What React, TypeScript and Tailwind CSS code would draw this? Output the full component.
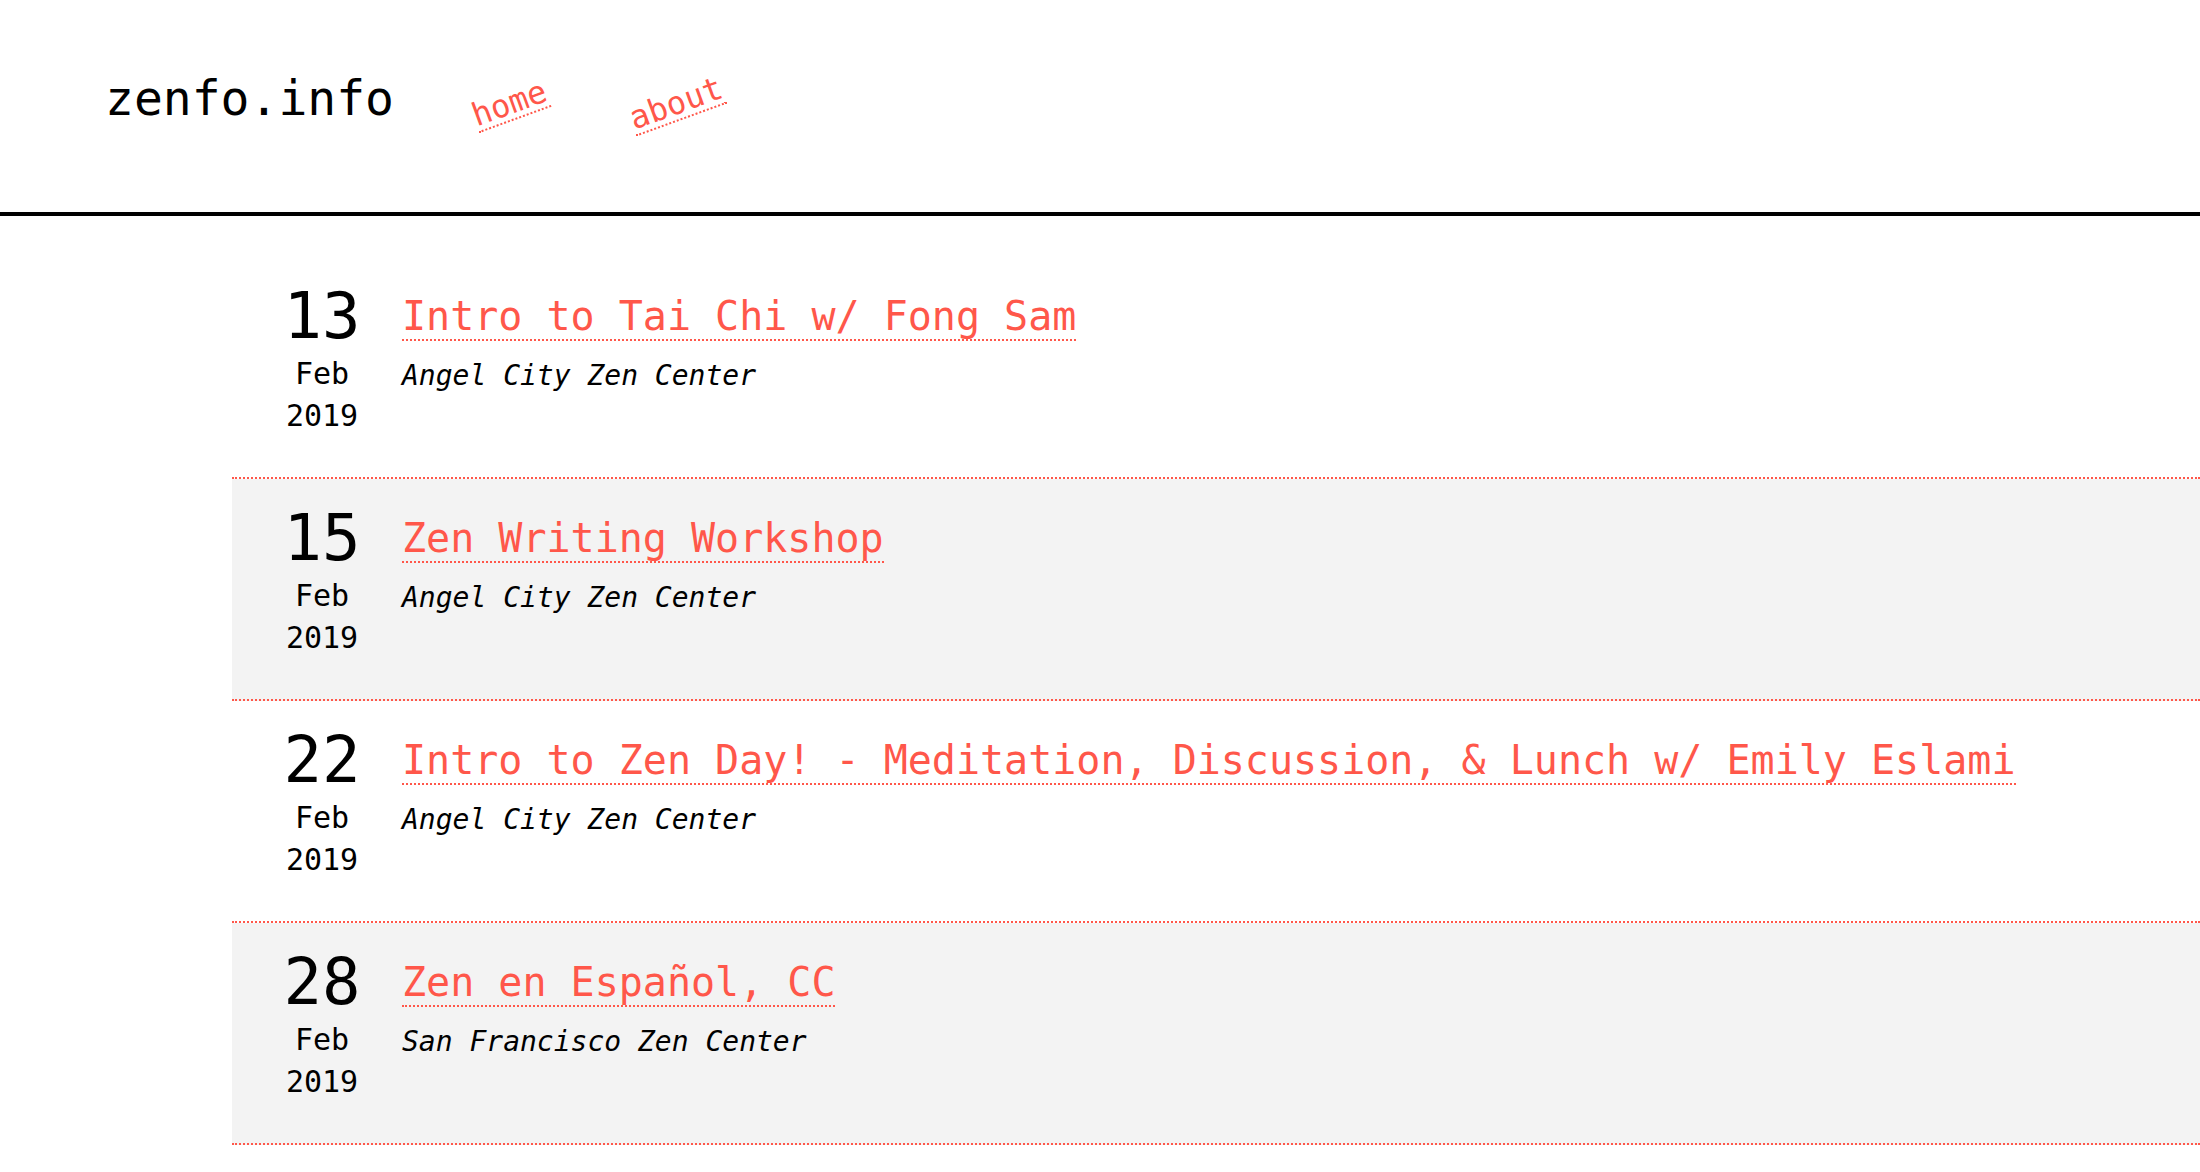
const events = [
  { day: "13", month: "Feb", year: "2019", title: "Intro to Tai Chi w/ Fong Sam", venue: "Angel City Zen Center" },
  { day: "15", month: "Feb", year: "2019", title: "Zen Writing Workshop", venue: "Angel City Zen Center" },
  {
    day: "22",
    month: "Feb",
    year: "2019",
    title: "Intro to Zen Day! - Meditation, Discussion, & Lunch w/ Emily Eslami",
    venue: "Angel City Zen Center",
  },
  { day: "28", month: "Feb", year: "2019", title: "Zen en Español, CC", venue: "San Francisco Zen Center" },
];

const App = () => {
  return (
    <div className="min-h-screen bg-white font-['DejaVu_Sans_Mono','Liberation_Mono',monospace] text-black">
      <header className="flex h-[216px] items-start border-b-4 border-black pl-[105px] pt-[74px]">
        <a href="#" className="text-[48px] leading-[48px]">
          zenfo.info
        </a>
        <nav className="mt-[13px] ml-[77px] flex gap-[80px]">
          <a
            href="#"
            className="inline-block -rotate-20 border-b-2 border-dotted border-[#ff574a] text-[32px] leading-[32px] text-[#ff574a]"
          >
            home
          </a>
          <a
            href="#"
            className="inline-block -rotate-20 border-b-2 border-dotted border-[#ff574a] text-[32px] leading-[32px] text-[#ff574a]"
          >
            about
          </a>
        </nav>
      </header>

      <main className="ml-[232px] mt-[41px]">
        {events.map((ev, i) => (
          <div
            key={ev.day}
            className={`flex gap-[30px] border-b-2 border-dotted border-[#ff574a] pb-[40px] pl-[40px] pt-[22px] ${
              i % 2 === 1 ? "bg-[#f3f3f3]" : "bg-white"
            }`}
          >
            <div className="flex w-[100px] shrink-0 flex-col items-center">
              <span className="text-[64px] leading-[74px]">{ev.day}</span>
              <span className="text-[30px] leading-[42px]">{ev.month}</span>
              <span className="text-[30px] leading-[42px]">{ev.year}</span>
            </div>
            <div className="flex flex-col items-start">
              <div className="text-[40px] leading-[74px]">
                <a href="#" className="border-b-2 border-dotted border-[#ff574a] text-[#ff574a]">
                  {ev.title}
                </a>
              </div>
              <div className="mt-[2px] text-[28px] italic leading-[42px]">{ev.venue}</div>
            </div>
          </div>
        ))}
      </main>
    </div>
  );
};

export default App;
